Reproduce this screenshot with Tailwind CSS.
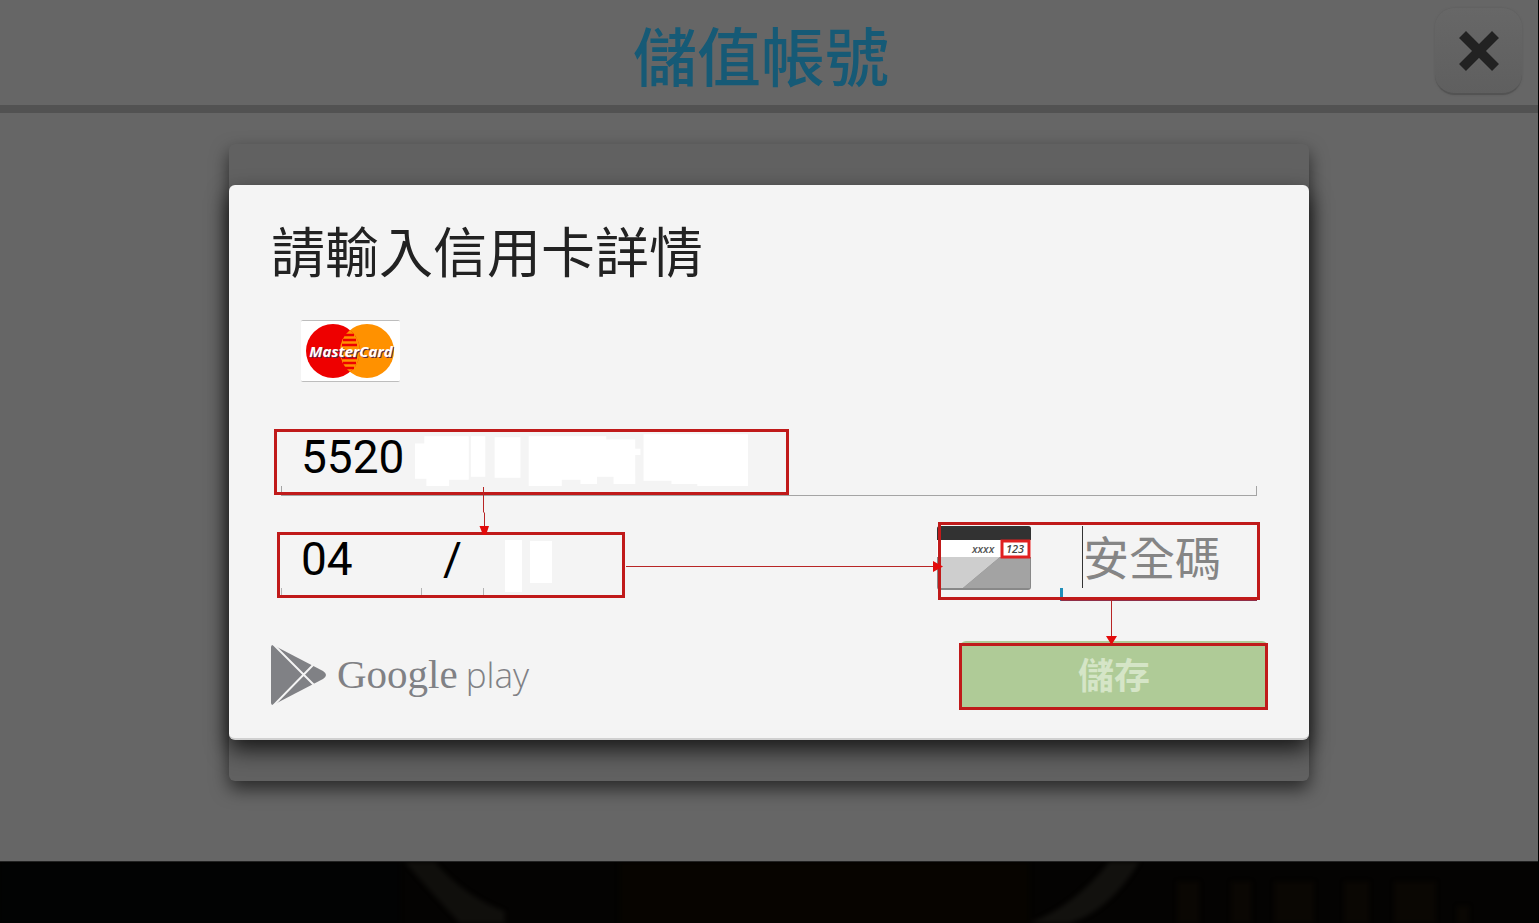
<!DOCTYPE html>
<html lang="zh-Hant">

<head>
  <meta charset="UTF-8">
  <meta name="viewport" content="width=device-width, initial-scale=1.0">
  <title>儲值帳號</title>
  <script src="https://cdn.jsdelivr.net/npm/@tailwindcss/browser@4"></script>
</head>

<body class="flex min-h-screen flex-col border-r border-black bg-[#666666] font-['Roboto','Noto_Sans_CJK_TC',sans-serif]">

  <header class="flex h-[113px] shrink-0 items-start border-b-8 border-[#525252] pt-2 pr-4">
    <div class="flex-1"></div>
    <h1 class="text-[64px] leading-[104px] font-medium text-[#165a76]">儲值帳號</h1>
    <div class="flex flex-1 justify-end">
      <button aria-label="關閉" class="flex size-[87px] items-center justify-center rounded-[20px] border-b-2 border-[#535353] bg-linear-to-b from-[#676767] to-[#5f5f5f] shadow-[0_0_2px_#585858]">
        <svg viewBox="0 0 42 42" class="size-[42px]">
          <path d="M8.5 2 21 14.5 33.500 2 40.500 9 28 21.500 40.500 34 33.500 41 21 28.500 8.500 41 1.500 34 14 21.500 1.500 9Z" fill="#777" />
          <path d="M8 1 21 14 34 1 41 8 28 21 41 34 34 41 21 28 8 41 1 34 14 21 1 8Z" fill="#222" />
        </svg>
      </button>
    </div>
  </header>

  <main class="flex-1 px-4 pt-[31px] pb-10">
    <div class="mx-auto max-w-[1080px] rounded-md bg-[#616161] py-[41px] shadow-[0_8px_18px_rgb(0_0_0/0.6)]">
      <form class="relative rounded-md border-b-2 border-[#d0d0d0] bg-[#f4f4f4] pt-[30px] pb-[29px] shadow-[0_10px_22px_rgb(0_0_0/0.75)]">
        <h2 class="px-[42px] text-[54px] leading-[80px] text-[#222222]">請輸入信用卡詳情</h2>

        <svg viewBox="0 0 99 62" class="mt-[25px] ml-[72px] h-[62px] w-[99px]" role="img" aria-label="MasterCard">
          <rect width="99" height="62" rx="2" fill="#bdbdbd" />
          <rect y="1" width="99" height="60" rx="1" fill="#fff" />
          <circle cx="66" cy="31" r="27" fill="#ff9100" />
          <circle cx="32" cy="31" r="27" fill="#ee0000" />
          <path d="M49 10a27 27 0 0 1 0 42a27 27 0 0 1 0-42Z" fill="#ff9100" />
          <path d="M44 15h9M42 20h13M41 25h15M41 38h15M42 43h13M44 48h9" stroke="#ee0000" stroke-width="2.500" />
          <text x="51" y="38" text-anchor="middle" class="font-['Open_Sans',sans-serif] text-[15px] font-bold italic" fill="#5c2a4a">MasterCard</text>
          <text x="50" y="37" text-anchor="middle" class="font-['Open_Sans',sans-serif] text-[15px] font-bold italic" fill="#fff">MasterCard</text>
        </svg>

        <!-- card number -->
        <div class="mt-[46px] px-[52px]">
          <label for="number" class="sr-only">信用卡號碼</label>
          <div class="flex items-center">
            <input id="number" type="text" value="5520" class="h-[58px] w-[134px] pl-5 text-[46px] leading-[58px] text-black outline-none">
            <svg viewBox="0 -4 323 56" class="h-[58px] w-[334px]" fill="#fff" aria-hidden="true">
              <path d="M0 11H9V4H52V46H33V52H11V45H0ZM54 4H68V43H54ZM77 5H102V44H77ZM110 4H160V46H142V52H110ZM160 4H185V7H213V16H218V22H213V50H192V43H176V50H160ZM221 2H322V52H273V50H248V47H221Z" />
            </svg>
          </div>
          <div class="h-[10px] border-x border-b border-[#a4a4a4]"></div>
        </div>

        <!-- expiry date and security code -->
        <div class="mt-[34px] flex items-start px-[52px]">
          <div class="w-[141px]">
            <label for="month" class="sr-only">月</label>
            <input id="month" type="text" value="04" class="block h-[58px] w-full pl-5 text-[46px] leading-[58px] text-black outline-none">
            <div class="h-[10px] border-x border-b border-[#b4b4b4]"></div>
          </div>
          <span class="w-[61px] text-center text-[46px] leading-[58px] text-black">/</span>
          <div class="w-[141px]">
            <label for="year" class="sr-only">年</label>
            <div class="flex h-[58px] items-start pt-[9px] pl-[22px]">
              <svg viewBox="0 0 48 54" class="h-[54px] w-12 shrink-0" fill="#fff" aria-hidden="true">
                <path d="M0 1H17V53H0ZM25 2H47V44H25Z" />
              </svg>
              <input id="year" type="text" class="h-10 w-full outline-none">
            </div>
            <div class="h-[10px] border-x border-b border-[#b4b4b4]"></div>
          </div>
          <div class="flex-1"></div>
          <svg viewBox="0 0 94 64" class="-mt-1 mr-[29px] h-16 w-[94px]" aria-hidden="true">
            <rect width="94" height="64" rx="3" fill="#888" />
            <path d="M0 14V3a3 3 0 0 1 3-3H91a3 3 0 0 1 3 3V14Z" fill="#323232" />
            <rect y="14" width="94" height="17" fill="#fff" />
            <path d="M1 31H63L26 62H1Z" fill="#cecece" />
            <path d="M63 31H93V62H26Z" fill="#a3a3a3" />
            <text x="35" y="27" class="font-['Open_Sans',sans-serif] text-[11px] font-semibold italic" fill="#555">xxxx</text>
            <rect x="65" y="15" width="27" height="16" fill="#fff" stroke="#e02020" stroke-width="3" />
            <text x="69" y="27" class="font-['Open_Sans',sans-serif] text-[11px] font-semibold italic" fill="#444">123</text>
          </svg>
          <div class="relative w-[197px]">
            <label for="cvc" class="sr-only">安全碼</label>
            <input id="cvc" type="text" placeholder="安全碼" class="block h-[58px] w-full pl-[23px] text-[46px] leading-[58px] text-black outline-none placeholder:text-[#858585]">
            <span class="absolute -top-1 left-[22px] h-[62px] w-px bg-[#333333]"></span>
            <div class="h-[13px] border-b-2 border-l-3 border-b-[#8f2f48] border-l-[#218fb9]"></div>
          </div>
        </div>

        <div class="mt-10 flex items-center justify-between pr-[41px] pl-[42px]">
          <div class="flex items-center text-[#808185]">
            <svg viewBox="0 0 56 62" class="mr-[10px] h-[62px] w-14" aria-hidden="true">
              <path d="M2 1 52 27Q58 31 52 35L2 61Q0 61 0 59V3Q0 1 2 1Z" fill="#808185" />
              <path d="M1-1 45 43M1 63 44 19" stroke="#f4f4f4" stroke-width="2" />
            </svg>
            <span class="mr-2 font-['Liberation_Serif',serif] text-[41px]">Google</span>
            <span class="font-['Open_Sans',sans-serif] text-[35px] font-light">play</span>
          </div>
          <button type="submit" class="h-[68px] w-[308px] rounded-md bg-[#afcb97] pt-1 text-[36px] leading-[64px] font-bold text-[#d5e5c7]">儲存</button>
        </div>

        <!-- step markers -->
        <svg viewBox="0 0 1080 556" class="pointer-events-none absolute top-0 left-0 h-[556px] w-[1080px]" fill="none" aria-hidden="true">
          <g stroke="#c01a1a" stroke-width="3">
            <rect x="46.500" y="245.500" width="512" height="63" />
            <rect x="49.500" y="348.500" width="345" height="63" />
            <rect x="710.500" y="338.500" width="319" height="75" />
            <rect x="731.500" y="459.500" width="306" height="64" />
          </g>
          <path d="M254.500 302V327L255.500 328V346M397 381.500H708M882.500 415V452" stroke="#b82525" />
          <path d="M250.500 341H260L257 350H254ZM704 376 714 381.500 704 387ZM877 451H888L882.500 460Z" fill="#e30b0b" />
        </svg>
      </form>
    </div>
  </main>

  <footer class="h-[62px] shrink-0 overflow-hidden border-t border-[#222222] bg-[#040302]">
    <svg viewBox="0 0 1539 62" preserveAspectRatio="none" class="h-full w-full blur-[2px]" aria-hidden="true">
      <rect width="400" height="62" fill="#020303" />
      <rect x="620" width="410" height="62" fill="#070400" />
      <path d="M405 0H435Q465 35 505 50V62H460Q435 35 405 0Z" fill="#100f0c" />
      <path d="M1110 0H1140Q1110 50 1070 62H1030Q1075 45 1110 0Z" fill="#12110e" />
      <path d="M1178 20H1200V62H1178ZM1232 20H1252V62H1232ZM1275 20H1315V62H1275ZM1345 20H1370V62H1345ZM1395 20H1437V62H1395ZM1458 45H1470V62H1458Z" fill="#0a0703" />
    </svg>
  </footer>

</body>

</html>
